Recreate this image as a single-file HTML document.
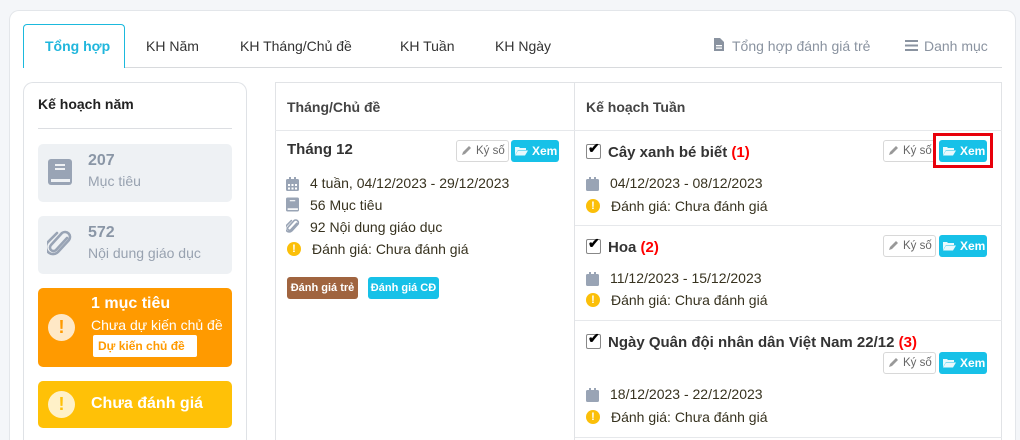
<!DOCTYPE html>
<html><head><meta charset="utf-8"><style>
*{box-sizing:border-box;margin:0;padding:0}
html,body{width:1020px;height:440px;overflow:hidden}
body{background:#f4f6f9;font-family:"Liberation Sans",sans-serif;font-size:14px;color:#37321f;position:relative}
.abs{position:absolute}
.card{left:9px;top:10px;width:1007px;height:440px;background:#fff;border:1px solid #e3e6ea;border-bottom:none;border-radius:10px 10px 0 0}
.tab{top:25px;height:43px;line-height:42px;font-size:14px;color:#333;white-space:nowrap}
.gray{color:#8a93a0}
.lp{left:23px;top:82px;width:224px;height:358px;border:1px solid #dfe2e6;border-bottom:none;border-radius:10px 10px 0 0;background:#fff}
.box{left:38px;width:194px;border-radius:5px}
.tbl{left:275px;top:82px;width:727px;height:358px;border:1px solid #e1e3e6;border-bottom:none}
.b{font-weight:bold}
.btnk{width:53px;height:22px;border:1px solid #d8d8d8;border-radius:3px;font-size:11.5px;color:#666;line-height:20px;padding-left:19px;background:#fff;white-space:nowrap}
.btnx{width:48px;height:22px;background:#17c1e8;border-radius:3px;color:#fff;font-size:12px;font-weight:bold;line-height:22px;padding-left:21px}
.chk{width:15px;height:15px;border:1px solid #888;border-radius:2px;background:#fff}
.ic{width:14px;height:14px}
.warn{width:14px;height:14px;border-radius:50%;background:#fbbf09;color:#fff;font-size:11px;font-weight:bold;text-align:center;line-height:14px}
.hl{height:1px;background:#e6e8eb}
</style></head><body>
<div class="abs card"></div>
<div class="abs" style="left:23px;top:67px;width:979px;height:1px;background:#d8dadd"></div>
<div class="abs" style="left:23px;top:24px;width:102px;height:44px;background:#fff;border:1px solid #1bb9dd;border-bottom:none;border-radius:4px 4px 0 0"></div>
<div class="abs tab b" style="left:45px;color:#20b6dc">Tổng hợp</div>
<div class="abs tab" style="left:146px">KH Năm</div>
<div class="abs tab" style="left:240px">KH Tháng/Chủ đề</div>
<div class="abs tab" style="left:400px">KH Tuần</div>
<div class="abs tab" style="left:495px">KH Ngày</div>
<svg class="abs" style="left:714px;top:38px" width="10" height="13" viewBox="0 0 10 13"><path d="M0 0h6l4 4v9H0z" fill="#8a93a0"/><rect x="2" y="7" width="6" height="1.3" fill="#fff"/><rect x="2" y="9.5" width="6" height="1.3" fill="#fff"/></svg>
<div class="abs tab gray" style="left:732px">Tổng hợp đánh giá trẻ</div>
<svg class="abs" style="left:905px;top:40px" width="13" height="11"><rect y="0" width="13" height="2" fill="#8a93a0"/><rect y="4.5" width="13" height="2" fill="#8a93a0"/><rect y="9" width="13" height="2" fill="#8a93a0"/></svg>
<div class="abs tab gray" style="left:924px">Danh mục</div>

<div class="abs lp"></div>
<div class="abs b" style="left:38px;top:96px;font-size:14px;color:#222">Kế hoạch năm</div>
<div class="abs" style="left:38px;top:128px;width:194px;height:1px;background:#dcdee2"></div>
<div class="abs box" style="top:144px;height:58px;background:#eef1f4"></div>
<svg class="abs" style="left:48px;top:159px" width="24" height="26" viewBox="0 0 24 26"><rect x="0" y="0" width="24" height="26" rx="3" fill="#99a4b5"/><rect x="7" y="5" width="10" height="2" fill="#eef1f4"/><rect x="7" y="9" width="10" height="2" fill="#eef1f4"/><rect x="3" y="20" width="19" height="3" fill="#eef1f4"/></svg>
<div class="abs b" style="left:88px;top:152px;font-size:16px;color:#8a96a6">207</div>
<div class="abs" style="left:88px;top:173px;font-size:14px;color:#98a2b0">Mục tiêu</div>
<div class="abs box" style="top:216px;height:58px;background:#eef1f4"></div>
<svg class="abs" style="left:47px;top:230px" width="26" height="28" viewBox="0 0 26 28"><path d="M20 8 L9 20 a3.5 3.5 0 0 1 -5 -5 L15 3 a5 5 0 0 1 7 7 L11 22 a7 7 0 0 1 -10 -10 L10 3" fill="none" stroke="#99a4b5" stroke-width="2.6" stroke-linecap="round"/></svg>
<div class="abs b" style="left:88px;top:224px;font-size:16px;color:#8a96a6">572</div>
<div class="abs" style="left:88px;top:245px;font-size:14px;color:#98a2b0">Nội dung giáo dục</div>
<div class="abs box" style="top:288px;height:79px;background:#ff9a00"></div>
<div class="abs" style="left:48px;top:314px;width:27px;height:27px;border-radius:50%;background:#ffe8c6;color:#ff9a00;font-weight:bold;text-align:center;line-height:27px;font-size:18px">!</div>
<div class="abs b" style="left:91px;top:295px;font-size:16px;color:#fff">1 mục tiêu</div>
<div class="abs" style="left:91px;top:317px;font-size:14px;color:#fff">Chưa dự kiến chủ đề</div>
<div class="abs b" style="left:93px;top:335px;width:104px;height:22px;background:#fff;border-radius:2px;color:#ff9a00;font-size:12px;line-height:22px;padding-left:5px">Dự kiến chủ đề</div>
<div class="abs box" style="top:381px;height:47px;background:#ffc107"></div>
<div class="abs" style="left:48px;top:391px;width:27px;height:27px;border-radius:50%;background:#fff1c8;color:#ffc107;font-weight:bold;text-align:center;line-height:27px;font-size:18px">!</div>
<div class="abs b" style="left:91px;top:395px;font-size:16px;color:#fff">Chưa đánh giá</div>

<div class="abs tbl"></div>
<div class="abs" style="left:574px;top:82px;width:1px;height:358px;background:#e1e3e6"></div>
<div class="abs hl" style="left:275px;top:130px;width:727px"></div>
<div class="abs b" style="left:287px;top:99px;color:#444">Tháng/Chủ đề</div>
<div class="abs b" style="left:586px;top:99px;color:#444">Kế hoạch Tuần</div>

<div class="abs b" style="left:287px;top:141px;font-size:15px;color:#333">Tháng 12</div>
<div class="abs btnk" style="left:456px;top:140px">Ký số</div>
<svg class="abs" style="left:461px;top:145px" width="11" height="11"><path d="M1 10 L2 7 L8 1 L10 3 L4 9 Z" fill="#999"/></svg>
<div class="abs btnx" style="left:511px;top:140px">Xem</div>
<svg class="abs" style="left:515px;top:146px" width="13" height="10"><path d="M0 1h4l1 1h6v2H3L0 9z M3 4.5h10l-3 5H0z" fill="#fff" opacity=".9"/></svg>
<svg class="abs ic" style="left:286px;top:177px" viewBox="0 0 14 14"><rect x="0" y="2" width="13" height="12" rx="1.5" fill="#99a4b5"/><rect x="3" y="0" width="2" height="3" fill="#99a4b5"/><rect x="8" y="0" width="2" height="3" fill="#99a4b5"/><g fill="#fff"><rect x="2" y="7" width="2" height="2"/><rect x="5.5" y="7" width="2" height="2"/><rect x="9" y="7" width="2" height="2"/><rect x="2" y="10.5" width="2" height="2"/><rect x="5.5" y="10.5" width="2" height="2"/><rect x="9" y="10.5" width="2" height="2"/></g></svg>
<div class="abs" style="left:310px;top:175px">4 tuần, 04/12/2023 - 29/12/2023</div>
<svg class="abs" style="left:286px;top:197px" width="13" height="15" viewBox="0 0 24 26"><rect width="24" height="26" rx="3" fill="#99a4b5"/><rect x="7" y="5" width="10" height="2" fill="#fff"/><rect x="3" y="20" width="19" height="3" fill="#fff"/></svg>
<div class="abs" style="left:310px;top:197px">56 Mục tiêu</div>
<svg class="abs" style="left:286px;top:219px" width="14" height="15" viewBox="0 0 26 28"><path d="M20 8 L9 20 a3.5 3.5 0 0 1 -5 -5 L15 3 a5 5 0 0 1 7 7 L11 22 a7 7 0 0 1 -10 -10 L10 3" fill="none" stroke="#99a4b5" stroke-width="3" stroke-linecap="round"/></svg>
<div class="abs" style="left:310px;top:219px">92 Nội dung giáo dục</div>
<div class="abs warn" style="left:287px;top:242px">!</div>
<div class="abs" style="left:312px;top:241px">Đánh giá: Chưa đánh giá</div>
<div class="abs b" style="left:287px;top:277px;width:71px;height:22px;background:#a0643f;border-radius:3px;color:#fff;font-size:11px;line-height:22px;text-align:center">Đánh giá trẻ</div>
<div class="abs b" style="left:368px;top:277px;width:71px;height:22px;background:#17c1e8;border-radius:3px;color:#fff;font-size:11px;line-height:22px;text-align:center">Đánh giá CĐ</div>

<div class="abs hl" style="left:575px;top:225px;width:427px"></div>
<div class="abs hl" style="left:575px;top:320px;width:427px"></div>
<div class="abs hl" style="left:575px;top:437px;width:427px"></div>

<div class="abs chk" style="left:586px;top:144px"></div><div class="abs b" style="left:588px;top:140px;font-size:14px;color:#000">✔</div>
<div class="abs b" style="left:608px;top:144px;font-size:15px;color:#333">Cây xanh bé biết <span style="color:#f00">(1)</span></div>
<div class="abs btnk" style="left:883px;top:140px">Ký số</div>
<svg class="abs" style="left:888px;top:145px" width="11" height="11"><path d="M1 10 L2 7 L8 1 L10 3 L4 9 Z" fill="#999"/></svg>
<div class="abs btnx" style="left:939px;top:140px">Xem</div>
<svg class="abs" style="left:943px;top:146px" width="13" height="10"><path d="M0 1h4l1 1h6v2H3L0 9z M3 4.5h10l-3 5H0z" fill="#fff" opacity=".9"/></svg>
<div class="abs" style="left:933px;top:133px;width:60px;height:35px;border:3px solid #e8000b"></div>
<svg class="abs ic" style="left:586px;top:177px" viewBox="0 0 14 14"><rect x="0" y="2" width="13" height="12" rx="1.5" fill="#99a4b5"/><rect x="3" y="0" width="2" height="3" fill="#99a4b5"/><rect x="8" y="0" width="2" height="3" fill="#99a4b5"/></svg>
<div class="abs" style="left:610px;top:175px">04/12/2023 - 08/12/2023</div>
<div class="abs warn" style="left:586px;top:199px">!</div>
<div class="abs" style="left:611px;top:198px">Đánh giá: Chưa đánh giá</div>

<div class="abs chk" style="left:586px;top:239px"></div><div class="abs b" style="left:588px;top:235px;font-size:14px;color:#000">✔</div>
<div class="abs b" style="left:608px;top:239px;font-size:15px;color:#333">Hoa <span style="color:#f00">(2)</span></div>
<div class="abs btnk" style="left:883px;top:235px">Ký số</div>
<svg class="abs" style="left:888px;top:240px" width="11" height="11"><path d="M1 10 L2 7 L8 1 L10 3 L4 9 Z" fill="#999"/></svg>
<div class="abs btnx" style="left:939px;top:235px">Xem</div>
<svg class="abs" style="left:943px;top:241px" width="13" height="10"><path d="M0 1h4l1 1h6v2H3L0 9z M3 4.5h10l-3 5H0z" fill="#fff" opacity=".9"/></svg>
<svg class="abs ic" style="left:586px;top:272px" viewBox="0 0 14 14"><rect x="0" y="2" width="13" height="12" rx="1.5" fill="#99a4b5"/><rect x="3" y="0" width="2" height="3" fill="#99a4b5"/><rect x="8" y="0" width="2" height="3" fill="#99a4b5"/></svg>
<div class="abs" style="left:610px;top:270px">11/12/2023 - 15/12/2023</div>
<div class="abs warn" style="left:586px;top:293px">!</div>
<div class="abs" style="left:611px;top:292px">Đánh giá: Chưa đánh giá</div>

<div class="abs chk" style="left:586px;top:334px"></div><div class="abs b" style="left:588px;top:330px;font-size:14px;color:#000">✔</div>
<div class="abs b" style="left:608px;top:334px;font-size:15px;color:#333">Ngày Quân đội nhân dân Việt Nam 22/12 <span style="color:#f00">(3)</span></div>
<div class="abs btnk" style="left:883px;top:352px">Ký số</div>
<svg class="abs" style="left:888px;top:357px" width="11" height="11"><path d="M1 10 L2 7 L8 1 L10 3 L4 9 Z" fill="#999"/></svg>
<div class="abs btnx" style="left:939px;top:352px">Xem</div>
<svg class="abs" style="left:943px;top:358px" width="13" height="10"><path d="M0 1h4l1 1h6v2H3L0 9z M3 4.5h10l-3 5H0z" fill="#fff" opacity=".9"/></svg>
<svg class="abs ic" style="left:586px;top:388px" viewBox="0 0 14 14"><rect x="0" y="2" width="13" height="12" rx="1.5" fill="#99a4b5"/><rect x="3" y="0" width="2" height="3" fill="#99a4b5"/><rect x="8" y="0" width="2" height="3" fill="#99a4b5"/></svg>
<div class="abs" style="left:610px;top:386px">18/12/2023 - 22/12/2023</div>
<div class="abs warn" style="left:586px;top:410px">!</div>
<div class="abs" style="left:611px;top:409px">Đánh giá: Chưa đánh giá</div>
</body></html>
